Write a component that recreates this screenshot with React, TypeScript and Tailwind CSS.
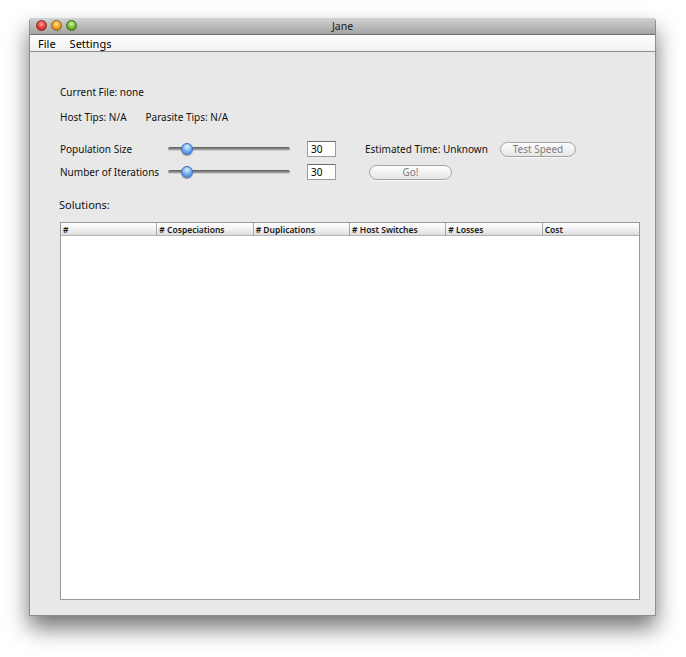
const font = { fontFamily: '"Noto Sans", "Open Sans", sans-serif' };

function Slider() {
  return (
    <div className="relative w-[122px] h-[14px] flex items-center">
      <div className="w-full h-[4px] rounded-full bg-gradient-to-b from-[#5a5a5a] to-[#a8a8a8] border-b border-[#d0d0d0]" />
      <div className="absolute left-[13px] top-[1px] w-[12px] h-[12px] rounded-full border border-[#3c6fb8] bg-[radial-gradient(circle_at_50%_30%,#e4f1ff_0%,#7cb4f4_45%,#2f71cf_100%)] shadow-[0_1px_1px_rgba(0,0,0,0.35)]" />
    </div>
  );
}

function NumField({ value }: { value: string }) {
  return (
    <div className="w-[29px] h-[16px] bg-white border border-[#9c9c9c] border-t-[#6e6e6e] text-[10px] leading-[14px] pl-[3px] text-black">
      {value}
    </div>
  );
}

function AquaButton({ label, w }: { label: string; w: string }) {
  return (
    <div className={`${w} h-[15px] rounded-full border border-[#a3a3a3] bg-gradient-to-b from-[#fdfdfd] to-[#e6e6e6] flex items-center justify-center text-[10px] text-[#7d7d7d] shadow-[0_1px_0_rgba(255,255,255,0.7)]`}>
      {label}
    </div>
  );
}

const columns = ['#', '# Cospeciations', '# Duplications', '# Host Switches', '# Losses', 'Cost'];

export default function App() {
  return (
    <div className="w-[686px] h-[657px] bg-white pl-[29px] pt-[18px]" style={font}>
      <div className="w-[627px] h-[598px] flex flex-col bg-[#e8e8e8] border border-[#8e8e8e] border-t-0 rounded-t-[4px] shadow-[0_12px_22px_rgba(0,0,0,0.55)]">
        {/* title bar */}
        <div className="relative h-[17px] rounded-t-[4px] bg-gradient-to-b from-[#d2d2d2] to-[#a4a4a4] border-b border-[#6f6f6f] flex items-center justify-center">
          <div className="absolute left-[6px] top-[2px] flex gap-[4px]">
            <span className="w-[11px] h-[11px] rounded-full border border-[#8a2a2a] bg-[radial-gradient(circle_at_50%_35%,#ffb3a8_0%,#f0473f_45%,#a4140f_100%)]" />
            <span className="w-[11px] h-[11px] rounded-full border border-[#8a6420] bg-[radial-gradient(circle_at_50%_35%,#ffe6a0_0%,#f4a72b_45%,#b06a09_100%)]" />
            <span className="w-[11px] h-[11px] rounded-full border border-[#3d6e1f] bg-[radial-gradient(circle_at_50%_35%,#d6f5a8_0%,#7ec43b_45%,#3c7e12_100%)]" />
          </div>
          <span className="text-[10.5px] text-[#202020] leading-none">Jane</span>
        </div>
        {/* menu bar */}
        <div className="h-[17px] bg-gradient-to-b from-[#ffffff] to-[#f0f0f0] border-b border-[#8f8f8f] flex items-center gap-[14px] pl-[8px] text-[11px] text-black leading-none">
          <span>File</span>
          <span>Settings</span>
        </div>
        {/* content */}
        <div className="flex-1 flex flex-col pl-[30px] pr-[15px] pt-[34px] pb-[15px] text-[10px] text-[#111] leading-[12px]">
          <div>Current File: none</div>
          <div className="mt-[13px] flex gap-[19px]">
            <span>Host Tips: N/A</span>
            <span>Parasite Tips: N/A</span>
          </div>
          <div className="mt-[18px] flex items-center h-[16px]">
            <span className="w-[108px]">Population Size</span>
            <Slider />
            <div className="ml-[17px]"><NumField value="30" /></div>
            <span className="ml-[29px] w-[135px]">Estimated Time: Unknown</span>
            <AquaButton label="Test Speed" w="w-[76px]" />
          </div>
          <div className="mt-[7px] flex items-center h-[16px]">
            <span className="w-[108px]">Number of Iterations</span>
            <Slider />
            <div className="ml-[17px]"><NumField value="30" /></div>
            <div className="ml-[33px]"><AquaButton label="Go!" w="w-[83px]" /></div>
          </div>
          <div className="mt-[18px] text-[11px] leading-[14px] -ml-[1px]">Solutions:</div>
          <div className="mt-[10px] flex-1 flex flex-col bg-white border border-[#9a9a9a]">
            <div className="h-[13px] grid grid-cols-6 bg-gradient-to-b from-[#ffffff] via-[#f2f2f2] to-[#dcdcdc] border-b border-[#b4b4b4]">
              {columns.map((c, i) => (
                <div
                  key={c}
                  className={`text-[8.5px] font-semibold leading-[13px] pl-[2px] text-[#1a1a1a] ${i < 5 ? 'border-r border-[#a8a8a8]' : ''}`}
                >
                  {c}
                </div>
              ))}
            </div>
            <div className="flex-1 bg-white" />
          </div>
        </div>
      </div>
    </div>
  );
}
